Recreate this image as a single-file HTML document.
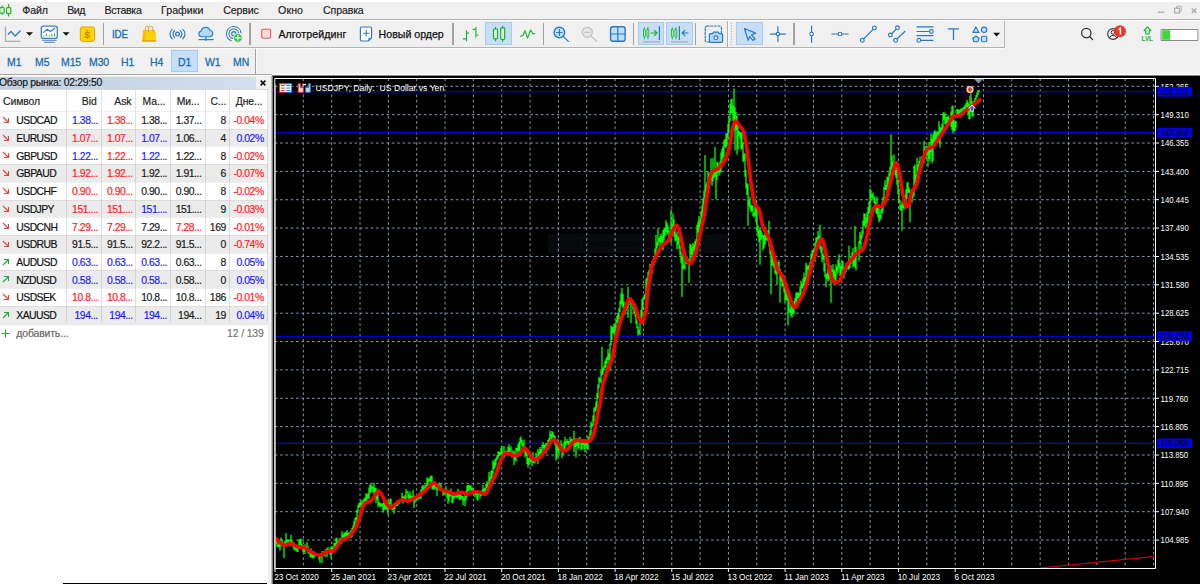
<!DOCTYPE html>
<html lang="ru"><head><meta charset="utf-8"><title>MetaTrader 5</title>
<style>
html,body{margin:0;padding:0;background:#f0f0f0;}
body{width:1200px;height:584px;overflow:hidden;font-family:"Liberation Sans",sans-serif;font-size:10.5px;color:#111;}
#app{position:relative;width:1200px;height:584px;overflow:hidden;background:#f0f0f0;}
.abs{position:absolute;}
/* top strip + menu */
.topstrip{position:absolute;left:0;top:0;width:1200px;height:2px;background:#fff;}
.menu span{position:absolute;top:3.7px;font-size:10.6px;line-height:12px;color:#1a1a1a;letter-spacing:-0.15px;white-space:nowrap;-webkit-text-stroke:0.15px #1a1a1a;}
.hline{position:absolute;left:0;width:1200px;height:1px;}
.tb-label{position:absolute;top:28px;font-size:10.6px;line-height:12px;color:#101010;white-space:nowrap;letter-spacing:0.1px;-webkit-text-stroke:0.25px #111;}
.tf span{position:absolute;top:55.9px;font-size:11.4px;line-height:13px;color:#1e6cb0;white-space:nowrap;letter-spacing:-0.1px;transform:scaleX(0.92);transform-origin:0 0;-webkit-text-stroke:0.3px #1e6cb0;}
.hl{position:absolute;background:#c7dff6;border:1px solid #a6cbef;box-sizing:border-box;}
.vdiv{position:absolute;width:1px;background:#a8a8a8;}
svg.ic{position:absolute;overflow:visible;}
/* market watch */
.mw{position:absolute;left:0;top:75px;width:272px;height:509px;background:#fff;overflow:hidden;}
.mwright{position:absolute;left:268px;top:0;width:4px;height:509px;background:#f0f0f0;}
.mwhead{position:absolute;left:0;top:1.5px;width:256px;height:12px;background:linear-gradient(to right,#c0cede,#c9d6e5 50%,#d3dfed);}
.mwtop{position:absolute;left:0;top:0;width:272px;height:15px;background:#f0f0f0;}
.mwshadow{position:absolute;left:0;top:14px;width:268px;height:1px;background:#d9d9d9;}
.mwhead span{position:absolute;left:-1px;top:0.9px;font-size:10.4px;line-height:12px;letter-spacing:-0.27px;color:#111;white-space:nowrap;-webkit-text-stroke:0.15px #111;}
.mwx{position:absolute;left:259.9px;top:4.6px;}
.mwcol{position:absolute;left:0;top:15px;width:268px;height:20.9px;background:#fff;}
.mwcol .t{top:6.2px;color:#222;letter-spacing:-0.08px;}
.row{position:absolute;left:0;width:268px;}
.t{position:absolute;top:4.3px;-webkit-text-stroke:0.18px currentColor;font-size:10.4px;line-height:12px;letter-spacing:-0.55px;white-space:nowrap;}
.t.r{text-align:right;}
.ar{position:absolute;left:2px;top:5px;}
.vsep{position:absolute;top:15px;width:1px;height:232px;background:rgba(150,150,150,0.28);}
/* chart */
.pl{font-family:"Liberation Sans",sans-serif;font-size:8.8px;fill:#fff;}
.ttl{font-family:"Liberation Sans",sans-serif;font-size:8.4px;fill:#fff;}

</style></head>
<body>
<div id="app">
<div class="topstrip"></div>
<!-- app logo -->
<svg class="ic" style="left:0;top:0" width="12" height="20" viewBox="0 0 12 20">
  <path d="M2.2 5.5V15M8.6 3.9V16.4" stroke="#20b030" stroke-width="1.1" fill="none"/>
  <rect x="-0.2" y="7.6" width="4.4" height="5.6" rx="1" fill="#e8ffe8" stroke="#20b030" stroke-width="1.2"/>
  <rect x="6.5" y="7.6" width="4.3" height="6" rx="1" fill="#e8ffe8" stroke="#20b030" stroke-width="1.2"/>
</svg>
<div class="menu">
  <span style="left:22.3px">Файл</span>
  <span style="left:67.2px;letter-spacing:-0.45px">Вид</span>
  <span style="left:104.4px;letter-spacing:-0.33px">Вставка</span>
  <span style="left:161px;letter-spacing:0.05px">Графики</span>
  <span style="left:223.2px">Сервис</span>
  <span style="left:278.1px;letter-spacing:0.1px">Окно</span>
  <span style="left:323.1px">Справка</span>
</div>
<!-- window controls -->
<svg class="ic" style="left:1155px;top:4px" width="45" height="12" viewBox="0 0 45 12">
  <path d="M2.8 8.2H9.4" stroke="#ababab" stroke-width="1.3"/>
  <path d="M21.5 4V2.3H26.3V7.2H24.6" stroke="#b4b4b4" stroke-width="1" fill="none"/>
  <rect x="19.6" y="4.2" width="4.8" height="4.8" stroke="#ababab" stroke-width="1.2" fill="none"/>
  <path d="M36.8 4.4L41.4 9M41.4 4.4L36.8 9" stroke="#ababab" stroke-width="1.4"/>
</svg>
<!-- separators between rows -->
<div class="hline" style="top:19px;background:#b4b4b4"></div>
<div class="hline" style="top:20px;background:#fbfbfb"></div>
<div class="hline" style="top:46.8px;background:#b2b2b2;width:1004px"></div>
<div class="hline" style="top:47.8px;background:#fbfbfb;width:1004px"></div>
<div class="vdiv" style="left:1003.5px;top:21px;height:26.5px;background:#b8b8b8"></div>
<div class="vdiv" style="left:727px;top:21px;height:26px;background:#b0b0b0"></div>
<div class="vdiv" style="left:728px;top:21px;height:26px;background:#fafafa"></div>
<div class="vdiv" style="left:255px;top:48.5px;height:26px;background:#a0a0a0"></div>
<div class="vdiv" style="left:256px;top:48.5px;height:26px;background:#fafafa"></div>
<!-- toolbar separators -->
<div class="vdiv" style="left:102.5px;top:23.2px;height:21.5px;width:1.4px;background:#a2a2a2"></div>
<div class="vdiv" style="left:249.4px;top:23.2px;height:21.5px;width:1.4px;background:#a2a2a2"></div>
<div class="vdiv" style="left:452.3px;top:23.2px;height:21.5px;width:1.4px;background:#a2a2a2"></div>
<div class="vdiv" style="left:542.9px;top:23.2px;height:21.5px;width:1.4px;background:#a2a2a2"></div>
<div class="vdiv" style="left:632.9px;top:23.2px;height:21.5px;width:1.4px;background:#a2a2a2"></div>
<div class="vdiv" style="left:694.8px;top:23.2px;height:21.5px;width:1.4px;background:#a2a2a2"></div>
<div class="vdiv" style="left:793.4px;top:23.2px;height:21.5px;width:1.4px;background:#a2a2a2"></div>
<!-- highlights -->
<div class="hl" style="left:485.3px;top:22.3px;width:26.6px;height:22.5px"></div>
<div class="hl" style="left:637.8px;top:22.3px;width:26.4px;height:22.5px"></div>
<div class="hl" style="left:666px;top:22.3px;width:26.5px;height:22.5px"></div>
<div class="hl" style="left:736px;top:22.3px;width:26.8px;height:22.5px"></div>
<div class="hl" style="left:171px;top:49.8px;width:26.5px;height:22.7px"></div>
<!-- all toolbar icons in one svg (page coords) -->
<svg class="ic" style="left:0;top:0" width="1200" height="50" viewBox="0 0 1200 50">
  <g fill="none" stroke-linecap="round" stroke-linejoin="round">
  <!-- chart icon -->
  <path d="M5.5 27V41.3H20" stroke="#ababab" stroke-width="1.3"/>
  <path d="M8.2 34.2L11 31.5L15.1 36L20.2 31" stroke="#2a7ac0" stroke-width="1.2"/>
  <path d="M26 32.2H33L29.5 35.8Z" fill="#111" stroke="none"/>
  <!-- indicators icon -->
  <rect x="41.3" y="26.1" width="16" height="12.3" rx="2.2" fill="#fff" stroke="#3a82c4" stroke-width="1.3"/>
  <path d="M43.6 32.4L47.2 29.3L50.4 31.5L55 28.3" stroke="#2a7ac0" stroke-width="1.1"/>
  <path d="M43.6 35.6V36.6M46.3 34V36.6M49.5 35.2V36.6M51.9 34.2V36.6M54.6 33.3V36.6" stroke="#22b43a" stroke-width="1.1" stroke-linecap="butt"/>
  <path d="M42.6 40.3H56.2M44.5 42.2H54.3" stroke="#3a82c4" stroke-width="1.1"/>
  <path d="M62.6 32.2H69.6L66.1 35.8Z" fill="#111" stroke="none"/>
  <!-- dollar icon -->
  <rect x="80.3" y="26.9" width="14.2" height="14.5" rx="2.3" fill="#ffd400" stroke="#e6a700" stroke-width="1"/>
  <!-- bag -->
  <path d="M143.6 30.2H154.9L156 41.5H142.6Z" fill="#ffd200" stroke="#fbfbfb" stroke-width="1.6"/>
  <path d="M143.6 30.2H154.9L156 41.5H142.6Z" fill="#ffd200" stroke="#e2aa00" stroke-width="0.5"/>
  <path d="M143.6 30.2H145.6L145 41.5H142.6Z" fill="#f0bc00" stroke="none"/>
  <path d="M142.75 40.1H155.85L156 41.5H142.6Z" fill="#e4a800" stroke="none"/>
  <path d="M145.4 30.3V28.5a1.55 2.4 0 0 1 3.1 0V32.6M148.5 28.5a2.2 2.4 0 0 1 4.4 0V32.6" stroke="#d9a030" stroke-width="0.95" stroke-linecap="butt"/>
  <!-- signals -->
  <circle cx="177.5" cy="34.1" r="1.9" fill="#cfe6fb" stroke="#2a7ac0" stroke-width="1.2"/>
  <path d="M174.7 30.7a4.4 4.4 0 0 0 0 6.8M180.3 30.7a4.4 4.4 0 0 1 0 6.8M172.2 29.4a6.1 6.1 0 0 0 0 9.4M182.8 29.4a6.1 6.1 0 0 1 0 9.4" stroke="#2a7ac0" stroke-width="1.15"/>
  <!-- cloud -->
  <path d="M201.6 36.8a2.9 2.9 0 0 1 -0.5 -5.7a4.6 4.6 0 0 1 8.8 -0.9a3.4 3.4 0 0 1 0.5 6.6Z" fill="#b4dafa" stroke="#2e7cc0" stroke-width="1.1"/>
  <path d="M206 37V39.5M199 39.6H213.2" stroke="#2e7cc0" stroke-width="1.2"/>
  <circle cx="206" cy="39.8" r="1" fill="#2e7cc0" stroke="none"/>
  <!-- radar -->
  <circle cx="233.8" cy="33.8" r="2.2" fill="#cfe6fb" stroke="#2e7cc0" stroke-width="1.1"/>
  <path d="M238.6 33.8a4.8 4.8 0 1 0 -6 4.6M241 32.8a7.3 7.3 0 1 0 -9.8 7.9" stroke="#2e7cc0" stroke-width="1.1"/>
  <circle cx="237.9" cy="37.9" r="4.3" fill="#30c040" stroke="#f0f0f0" stroke-width="0.8"/>
  <path d="M235.5 37.9H240.3M237.9 35.5V40.3" stroke="#fff" stroke-width="1.1"/>
  <!-- algo trading -->
  <rect x="261.7" y="29.3" width="9" height="9" rx="1.6" fill="#fbdcd8" stroke="#e25850" stroke-width="1.1"/>
  <!-- new order -->
  <g transform="translate(0.7,0)"><path d="M361.3 27H369.3a1.6 1.6 0 0 1 1.6 1.6V37.6L367.6 41H361.3a1.6 1.6 0 0 1 -1.6 -1.6V28.6a1.6 1.6 0 0 1 1.6 -1.6Z" fill="#fff" stroke="#2e7cc0" stroke-width="1.2"/>
  <path d="M370.9 37.8H367.8V41Z" fill="#2e7cc0" stroke="none"/>
  <path d="M362.8 33.2H368.4M365.6 30.4V36" stroke="#2e7cc0" stroke-width="1.1"/></g>
  <!-- bars -->
  <path d="M466.5 30.6V41.3M463 38.8H466.5M466.5 33.1H469M475.9 26.9V37.5M472.5 29.4H475.9M475.9 35H478.5" stroke="#22b43a" stroke-width="1.15" stroke-linecap="butt"/>
  <!-- candles -->
  <path d="M495.5 27.3V40.7M502.7 26V41.6" stroke="#18b030" stroke-width="1.1"/>
  <rect x="493.5" y="29" width="4" height="9.8" rx="0.8" fill="#dcfadc" stroke="#18b030" stroke-width="1.2"/>
  <rect x="500.7" y="27.8" width="4" height="11.6" rx="0.8" fill="#dcfadc" stroke="#18b030" stroke-width="1.2"/>
  <!-- line chart -->
  <path d="M520.6 36.3L523.1 35.3L525 30.6L527.5 38.1L530.6 30L533.1 33.8L534.8 33.5" stroke="#22b43a" stroke-width="1.2"/>
  <!-- zoom in -->
  <circle cx="559.4" cy="32.5" r="5.3" fill="#c4e2fb" stroke="#2a78c0" stroke-width="1.4"/>
  <path d="M556.6 32.5H562.2M559.4 29.7V35.3" stroke="#2a78c0" stroke-width="1.2"/>
  <path d="M563.4 36.6L568.4 41.4" stroke="#2a78c0" stroke-width="1.3"/>
  <!-- zoom out -->
  <circle cx="587.3" cy="32.3" r="5" fill="#e6e6e6" stroke="#c2c2c2" stroke-width="1.3"/>
  <path d="M584.7 32.3H589.9" stroke="#c2c2c2" stroke-width="1.2"/>
  <path d="M591.2 36.2L596.4 41" stroke="#c2c2c2" stroke-width="1.2"/>
  <!-- grid -->
  <rect x="610.6" y="26.8" width="14.5" height="14.5" rx="2.2" fill="#bfe0fb" stroke="#2a78c0" stroke-width="1.4"/>
  <path d="M617.8 27V41.2M610.8 34H625" stroke="#2a78c0" stroke-width="1.2"/>
  <!-- autoscroll -->
  <path d="M644.4 27.6V39M647.9 27.6V39" stroke="#18b030" stroke-width="0.9"/>
  <rect x="643.5" y="29.6" width="1.8" height="7.2" rx="0.5" fill="#dcfadc" stroke="#18b030" stroke-width="0.9"/>
  <rect x="647" y="29.2" width="1.8" height="8" rx="0.5" fill="#dcfadc" stroke="#18b030" stroke-width="0.9"/>
  <path d="M651 33H656.8M654.4 30.4L657 33L654.4 35.6" stroke="#18b030" stroke-width="1.2"/>
  <path d="M659.4 26.5V39.5" stroke="#2a78c0" stroke-width="1.2"/>
  <path d="M643 41.9H660" stroke="#a8a8a8" stroke-width="1.2" stroke-linecap="butt"/>
  <!-- chart shift -->
  <path d="M672.3 27.6V39M675.9 27.6V39" stroke="#18b030" stroke-width="0.9"/>
  <rect x="671.4" y="29.6" width="1.8" height="7.2" rx="0.5" fill="#dcfadc" stroke="#18b030" stroke-width="0.9"/>
  <rect x="675" y="29.2" width="1.8" height="8" rx="0.5" fill="#dcfadc" stroke="#18b030" stroke-width="0.9"/>
  <path d="M679.4 26.5V39.5" stroke="#2a78c0" stroke-width="1.2"/>
  <path d="M682.2 33H688M684.8 30.4L682.2 33L684.8 35.6" stroke="#2a78c0" stroke-width="1.2"/>
  <path d="M671 41.9H688" stroke="#a8a8a8" stroke-width="1.2" stroke-linecap="butt"/>
  <!-- screenshot -->
  <rect x="705.2" y="26" width="16.2" height="16" rx="2" stroke="#2a78c0" stroke-width="1.2" stroke-dasharray="2 1.6"/>
  <path d="M710.6 33.6H712.6L713.6 32.2H718.2L719.2 33.6H721.4a1.2 1.2 0 0 1 1.2 1.2V41.2a1.2 1.2 0 0 1 -1.2 1.2H710.6a1.2 1.2 0 0 1 -1.2 -1.2V34.8a1.2 1.2 0 0 1 1.2 -1.2Z" fill="#b4d8fa" stroke="#2a78c0" stroke-width="1.2"/>
  <circle cx="715.9" cy="37.8" r="1.9" fill="#eef6ff" stroke="#2a78c0" stroke-width="1.1"/>
  <!-- grip -->
  <path d="M731.5 23V45" stroke="#b0b0b0" stroke-width="1.2" stroke-dasharray="1 1.6" stroke-linecap="butt"/>
  <!-- cursor -->
  <path d="M744.4 28.5L755.6 33.1L751.4 35L755.2 38.8L753 40.4L749.6 36.6L748.2 40.4Z" fill="#b8defc" stroke="#2a78c0" stroke-width="1.2"/>
  <!-- crosshair -->
  <path d="M777.9 26.6V41.6M770.4 34.1H785.4" stroke="#2a78c0" stroke-width="1.2"/>
  <circle cx="777.9" cy="34.1" r="1.7" fill="#fff" stroke="#2a78c0" stroke-width="1.1"/>
  <!-- vline -->
  <path d="M811.6 26V42.3" stroke="#2a78c0" stroke-width="1.2"/>
  <circle cx="811.6" cy="34" r="1.8" fill="#fff" stroke="#2a78c0" stroke-width="1.1"/>
  <!-- hline -->
  <path d="M831.9 34H848.1" stroke="#2a78c0" stroke-width="1.2"/>
  <circle cx="840" cy="34" r="1.8" fill="#fff" stroke="#2a78c0" stroke-width="1.1"/>
  <!-- trend -->
  <path d="M862.3 40.3L874.4 27.9" stroke="#2a78c0" stroke-width="1.2"/>
  <circle cx="862.3" cy="40.3" r="1.9" fill="#e4f1fd" stroke="#2a78c0" stroke-width="1.1"/>
  <circle cx="874.4" cy="27.9" r="1.9" fill="#e4f1fd" stroke="#2a78c0" stroke-width="1.1"/>
  <!-- channel -->
  <path d="M890.4 35L897.5 27.8M895.6 40.3L904.8 31.5" stroke="#2a78c0" stroke-width="1.2"/>
  <circle cx="890.4" cy="35" r="1.9" fill="#e4f1fd" stroke="#2a78c0" stroke-width="1.1"/>
  <circle cx="897.5" cy="27.8" r="1.9" fill="#e4f1fd" stroke="#2a78c0" stroke-width="1.1"/>
  <circle cx="895.6" cy="40.3" r="1.9" fill="#e4f1fd" stroke="#2a78c0" stroke-width="1.1"/>
  <!-- fibo -->
  <path d="M917 26.9H933M917 31.5H929.4M917 35.6H933M921 40.3H933" stroke="#2a78c0" stroke-width="1.2"/>
  <circle cx="931.4" cy="31.5" r="1.9" fill="#e4f1fd" stroke="#2a78c0" stroke-width="1.1"/>
  <circle cx="918.8" cy="40.3" r="1.9" fill="#e4f1fd" stroke="#2a78c0" stroke-width="1.1"/>
  <!-- T -->
  <path d="M947.8 28.8H959M953.5 28.8V40" stroke="#2a78c0" stroke-width="1.3" stroke-linecap="butt"/>
  <!-- shapes -->
  <path d="M975.9 27L979 32.4H972.8Z" fill="#bfe0fb" stroke="#2a78c0" stroke-width="1.1"/>
  <circle cx="984.1" cy="29.8" r="2.7" fill="#bfe0fb" stroke="#2a78c0" stroke-width="1.1"/>
  <path d="M975.9 36L979 38.3L977.8 41.8H974L972.8 38.3Z" fill="#bfe0fb" stroke="#2a78c0" stroke-width="1.1"/>
  <rect x="981.4" y="36.3" width="5.4" height="5.4" rx="1.2" fill="#bfe0fb" stroke="#2a78c0" stroke-width="1.1"/>
  <path d="M993.1 32.8H1000.1L996.6 36.4Z" fill="#111" stroke="none"/>
  <!-- search -->
  <circle cx="1086.3" cy="33.1" r="4.7" stroke="#2a2a2a" stroke-width="1.2"/>
  <path d="M1089.8 36.7L1092.6 39.6" stroke="#2a2a2a" stroke-width="1.3"/>
  <!-- account -->
  <circle cx="1113.1" cy="34" r="5.4" stroke="#333" stroke-width="1.1"/>
  <circle cx="1113.1" cy="32.4" r="1.9" stroke="#333" stroke-width="1"/>
  <path d="M1109.4 37.8a4 4 0 0 1 7.4 0" stroke="#333" stroke-width="1"/>
  <circle cx="1120" cy="31.3" r="6" fill="#e8382c" stroke="none"/>
  <path d="M1118.6 29.6L1120.4 28.2V34.6" stroke="#fff" stroke-width="1.4" stroke-linecap="butt" stroke-linejoin="miter"/>
  <!-- LVL -->
  <path d="M1147.5 27L1151 30.6H1149.2V34H1145.8V30.6H1144Z" fill="#d8f8d8" stroke="#22b040" stroke-width="1.1"/>
  <!-- signal bar -->
  <rect x="1161.5" y="29.5" width="36.4" height="11" fill="#fff" stroke="#8c8c8c" stroke-width="1"/>
  <rect x="1162.2" y="30.2" width="8" height="9.6" fill="#3ed83e" stroke="none"/>
  </g>
  <text x="83.9" y="37.7" font-family="Liberation Sans" font-size="9.6" fill="#c08800" stroke="#c08800" stroke-width="0.25">S</text>
  <path d="M87.1 29.3V39.2" stroke="#c08800" stroke-width="0.9"/>
  <text x="1141.6" y="40.7" font-family="Liberation Sans" font-weight="bold" font-size="6.4" fill="#22b040" letter-spacing="-0.1">LVL</text>
</svg>
<span class="tb-label" style="left:112.4px;font-size:11.4px;letter-spacing:-0.2px;text-shadow:none;top:28.2px;transform:scaleX(0.86);transform-origin:0 0;-webkit-text-stroke:0.35px #1e6cb0;color:#1e6cb0">IDE</span>
<span class="tb-label" style="left:278.4px">Алготрейдинг</span>
<span class="tb-label" style="left:378.6px;letter-spacing:0">Новый ордер</span>
<div class="tf">
  <span style="left:7px">M1</span>
  <span style="left:35px">M5</span>
  <span style="left:61px">M15</span>
  <span style="left:89.1px">M30</span>
  <span style="left:121.2px">H1</span>
  <span style="left:150px">H4</span>
  <span style="left:178.3px">D1</span>
  <span style="left:205.4px">W1</span>
  <span style="left:233.2px">MN</span>
</div>
<!-- band under the toolbars / above panes -->
<div class="hline" style="top:73.9px;background:#a8a8a8;width:271.5px;z-index:5"></div>
<div class="hline" style="top:74.9px;background:#fbfbfb;width:271.5px;z-index:5"></div>

<div class="mw">
<div class="mwtop"></div><div class="mwright"></div>
<div class="mwhead"><span>Обзор рынка: 02:29:50</span></div><div class="mwshadow"></div>
<svg class="mwx" width="6" height="6" viewBox="0 0 6 6"><path d="M0.6 0.6L5.4 5.4M5.4 0.6L0.6 5.4" stroke="#111" stroke-width="1.6"/></svg>
<div class="mwcol">
<span class="t" style="left:3px">Символ</span>
<span class="t r" style="right:171.4px">Bid</span>
<span class="t r" style="right:136.6px">Ask</span>
<span class="t" style="left:142.6px">Ма...</span>
<span class="t" style="left:176.7px">Ми...</span>
<span class="t" style="left:210.5px">С...</span>
<span class="t" style="left:235.7px">Дне...</span>
</div>
<div class="row" style="top:35.90px;height:17.73px;background:#fff;box-shadow:inset 0 1px 0 rgba(0,0,0,0.06)">
<svg class="ar" width="8" height="8" viewBox="0 0 8 8"><path d="M1 1L6.5 6.5M6.5 2V6.5H2" stroke="#e8403a" stroke-width="1.1" fill="none"/></svg>
<span class="t" style="left:16.3px">USDCAD</span>
<span class="t r" style="right:170.2px;letter-spacing:-0.45px;color:#1c1cff">1.38...</span>
<span class="t r" style="right:135.4px;letter-spacing:-0.45px;color:#ff1c1c">1.38...</span>
<span class="t r" style="right:101.0px;letter-spacing:-0.45px;color:#1a1a1a">1.38...</span>
<span class="t r" style="right:66.6px;letter-spacing:-0.45px;color:#1a1a1a">1.37...</span>
<span class="t r" style="right:42.2px;letter-spacing:-0.45px;color:#1a1a1a">8</span>
<span class="t r" style="right:4.3px;letter-spacing:-0.45px;color:#ff1c1c">-0.04%</span>
</div>
<div class="row" style="top:53.63px;height:17.73px;background:#ebebeb;box-shadow:inset 0 1px 0 rgba(0,0,0,0.06)">
<svg class="ar" width="8" height="8" viewBox="0 0 8 8"><path d="M1 1L6.5 6.5M6.5 2V6.5H2" stroke="#e8403a" stroke-width="1.1" fill="none"/></svg>
<span class="t" style="left:16.3px">EURUSD</span>
<span class="t r" style="right:170.2px;letter-spacing:-0.45px;color:#ff1c1c">1.07...</span>
<span class="t r" style="right:135.4px;letter-spacing:-0.45px;color:#ff1c1c">1.07...</span>
<span class="t r" style="right:101.0px;letter-spacing:-0.45px;color:#1c1cff">1.07...</span>
<span class="t r" style="right:66.6px;letter-spacing:-0.45px;color:#1a1a1a">1.06...</span>
<span class="t r" style="right:42.2px;letter-spacing:-0.45px;color:#1a1a1a">4</span>
<span class="t r" style="right:4.3px;letter-spacing:-0.45px;color:#1c1cff">0.02%</span>
</div>
<div class="row" style="top:71.36px;height:17.73px;background:#fff;box-shadow:inset 0 1px 0 rgba(0,0,0,0.06)">
<svg class="ar" width="8" height="8" viewBox="0 0 8 8"><path d="M1 1L6.5 6.5M6.5 2V6.5H2" stroke="#e8403a" stroke-width="1.1" fill="none"/></svg>
<span class="t" style="left:16.3px">GBPUSD</span>
<span class="t r" style="right:170.2px;letter-spacing:-0.45px;color:#1c1cff">1.22...</span>
<span class="t r" style="right:135.4px;letter-spacing:-0.45px;color:#ff1c1c">1.22...</span>
<span class="t r" style="right:101.0px;letter-spacing:-0.45px;color:#1c1cff">1.22...</span>
<span class="t r" style="right:66.6px;letter-spacing:-0.45px;color:#1a1a1a">1.22...</span>
<span class="t r" style="right:42.2px;letter-spacing:-0.45px;color:#1a1a1a">8</span>
<span class="t r" style="right:4.3px;letter-spacing:-0.45px;color:#ff1c1c">-0.02%</span>
</div>
<div class="row" style="top:89.09px;height:17.73px;background:#ebebeb;box-shadow:inset 0 1px 0 rgba(0,0,0,0.06)">
<svg class="ar" width="8" height="8" viewBox="0 0 8 8"><path d="M1 1L6.5 6.5M6.5 2V6.5H2" stroke="#e8403a" stroke-width="1.1" fill="none"/></svg>
<span class="t" style="left:16.3px">GBPAUD</span>
<span class="t r" style="right:170.2px;letter-spacing:-0.45px;color:#ff1c1c">1.92...</span>
<span class="t r" style="right:135.4px;letter-spacing:-0.45px;color:#ff1c1c">1.92...</span>
<span class="t r" style="right:101.0px;letter-spacing:-0.45px;color:#1a1a1a">1.92...</span>
<span class="t r" style="right:66.6px;letter-spacing:-0.45px;color:#1a1a1a">1.91...</span>
<span class="t r" style="right:42.2px;letter-spacing:-0.45px;color:#1a1a1a">6</span>
<span class="t r" style="right:4.3px;letter-spacing:-0.45px;color:#ff1c1c">-0.07%</span>
</div>
<div class="row" style="top:106.82px;height:17.73px;background:#fff;box-shadow:inset 0 1px 0 rgba(0,0,0,0.06)">
<svg class="ar" width="8" height="8" viewBox="0 0 8 8"><path d="M1 1L6.5 6.5M6.5 2V6.5H2" stroke="#e8403a" stroke-width="1.1" fill="none"/></svg>
<span class="t" style="left:16.3px">USDCHF</span>
<span class="t r" style="right:170.2px;letter-spacing:-0.45px;color:#ff1c1c">0.90...</span>
<span class="t r" style="right:135.4px;letter-spacing:-0.45px;color:#ff1c1c">0.90...</span>
<span class="t r" style="right:101.0px;letter-spacing:-0.45px;color:#1a1a1a">0.90...</span>
<span class="t r" style="right:66.6px;letter-spacing:-0.45px;color:#1a1a1a">0.90...</span>
<span class="t r" style="right:42.2px;letter-spacing:-0.45px;color:#1a1a1a">8</span>
<span class="t r" style="right:4.3px;letter-spacing:-0.45px;color:#ff1c1c">-0.02%</span>
</div>
<div class="row" style="top:124.55px;height:17.73px;background:#ebebeb;box-shadow:inset 0 1px 0 rgba(0,0,0,0.06)">
<svg class="ar" width="8" height="8" viewBox="0 0 8 8"><path d="M1 1L6.5 6.5M6.5 2V6.5H2" stroke="#e8403a" stroke-width="1.1" fill="none"/></svg>
<span class="t" style="left:16.3px">USDJPY</span>
<span class="t r" style="right:170.2px;letter-spacing:-0.45px;color:#ff1c1c">151....</span>
<span class="t r" style="right:135.4px;letter-spacing:-0.45px;color:#ff1c1c">151....</span>
<span class="t r" style="right:101.0px;letter-spacing:-0.45px;color:#1c1cff">151....</span>
<span class="t r" style="right:66.6px;letter-spacing:-0.45px;color:#1a1a1a">151....</span>
<span class="t r" style="right:42.2px;letter-spacing:-0.45px;color:#1a1a1a">9</span>
<span class="t r" style="right:4.3px;letter-spacing:-0.45px;color:#ff1c1c">-0.03%</span>
</div>
<div class="row" style="top:142.28px;height:17.73px;background:#fff;box-shadow:inset 0 1px 0 rgba(0,0,0,0.06)">
<svg class="ar" width="8" height="8" viewBox="0 0 8 8"><path d="M1 1L6.5 6.5M6.5 2V6.5H2" stroke="#e8403a" stroke-width="1.1" fill="none"/></svg>
<span class="t" style="left:16.3px">USDCNH</span>
<span class="t r" style="right:170.2px;letter-spacing:-0.45px;color:#ff1c1c">7.29...</span>
<span class="t r" style="right:135.4px;letter-spacing:-0.45px;color:#ff1c1c">7.29...</span>
<span class="t r" style="right:101.0px;letter-spacing:-0.45px;color:#1a1a1a">7.29...</span>
<span class="t r" style="right:66.6px;letter-spacing:-0.45px;color:#ff1c1c">7.28...</span>
<span class="t r" style="right:42.2px;letter-spacing:-0.45px;color:#1a1a1a">169</span>
<span class="t r" style="right:4.3px;letter-spacing:-0.45px;color:#ff1c1c">-0.01%</span>
</div>
<div class="row" style="top:160.01px;height:17.73px;background:#ebebeb;box-shadow:inset 0 1px 0 rgba(0,0,0,0.06)">
<svg class="ar" width="8" height="8" viewBox="0 0 8 8"><path d="M1 1L6.5 6.5M6.5 2V6.5H2" stroke="#e8403a" stroke-width="1.1" fill="none"/></svg>
<span class="t" style="left:16.3px">USDRUB</span>
<span class="t r" style="right:170.2px;letter-spacing:-0.45px;color:#1a1a1a">91.5...</span>
<span class="t r" style="right:135.4px;letter-spacing:-0.45px;color:#1a1a1a">91.5...</span>
<span class="t r" style="right:101.0px;letter-spacing:-0.45px;color:#1a1a1a">92.2...</span>
<span class="t r" style="right:66.6px;letter-spacing:-0.45px;color:#1a1a1a">91.5...</span>
<span class="t r" style="right:42.2px;letter-spacing:-0.45px;color:#1a1a1a">0</span>
<span class="t r" style="right:4.3px;letter-spacing:-0.45px;color:#ff1c1c">-0.74%</span>
</div>
<div class="row" style="top:177.74px;height:17.73px;background:#fff;box-shadow:inset 0 1px 0 rgba(0,0,0,0.06)">
<svg class="ar" width="8" height="8" viewBox="0 0 8 8"><path d="M1 7L6.5 1.5M2 1.5H6.5V6" stroke="#22a83a" stroke-width="1.1" fill="none"/></svg>
<span class="t" style="left:16.3px">AUDUSD</span>
<span class="t r" style="right:170.2px;letter-spacing:-0.45px;color:#1c1cff">0.63...</span>
<span class="t r" style="right:135.4px;letter-spacing:-0.45px;color:#1c1cff">0.63...</span>
<span class="t r" style="right:101.0px;letter-spacing:-0.45px;color:#1c1cff">0.63...</span>
<span class="t r" style="right:66.6px;letter-spacing:-0.45px;color:#1a1a1a">0.63...</span>
<span class="t r" style="right:42.2px;letter-spacing:-0.45px;color:#1a1a1a">8</span>
<span class="t r" style="right:4.3px;letter-spacing:-0.45px;color:#1c1cff">0.05%</span>
</div>
<div class="row" style="top:195.47px;height:17.73px;background:#ebebeb;box-shadow:inset 0 1px 0 rgba(0,0,0,0.06)">
<svg class="ar" width="8" height="8" viewBox="0 0 8 8"><path d="M1 7L6.5 1.5M2 1.5H6.5V6" stroke="#22a83a" stroke-width="1.1" fill="none"/></svg>
<span class="t" style="left:16.3px">NZDUSD</span>
<span class="t r" style="right:170.2px;letter-spacing:-0.45px;color:#1c1cff">0.58...</span>
<span class="t r" style="right:135.4px;letter-spacing:-0.45px;color:#1c1cff">0.58...</span>
<span class="t r" style="right:101.0px;letter-spacing:-0.45px;color:#1c1cff">0.58...</span>
<span class="t r" style="right:66.6px;letter-spacing:-0.45px;color:#1a1a1a">0.58...</span>
<span class="t r" style="right:42.2px;letter-spacing:-0.45px;color:#1a1a1a">0</span>
<span class="t r" style="right:4.3px;letter-spacing:-0.45px;color:#1c1cff">0.05%</span>
</div>
<div class="row" style="top:213.20px;height:17.73px;background:#fff;box-shadow:inset 0 1px 0 rgba(0,0,0,0.06)">
<svg class="ar" width="8" height="8" viewBox="0 0 8 8"><path d="M1 1L6.5 6.5M6.5 2V6.5H2" stroke="#e8403a" stroke-width="1.1" fill="none"/></svg>
<span class="t" style="left:16.3px">USDSEK</span>
<span class="t r" style="right:170.2px;letter-spacing:-0.45px;color:#ff1c1c">10.8...</span>
<span class="t r" style="right:135.4px;letter-spacing:-0.45px;color:#ff1c1c">10.8...</span>
<span class="t r" style="right:101.0px;letter-spacing:-0.45px;color:#1a1a1a">10.8...</span>
<span class="t r" style="right:66.6px;letter-spacing:-0.45px;color:#1a1a1a">10.8...</span>
<span class="t r" style="right:42.2px;letter-spacing:-0.45px;color:#1a1a1a">186</span>
<span class="t r" style="right:4.3px;letter-spacing:-0.45px;color:#ff1c1c">-0.01%</span>
</div>
<div class="row" style="top:230.93px;height:17.73px;background:#ebebeb;box-shadow:inset 0 1px 0 rgba(0,0,0,0.06)">
<svg class="ar" width="8" height="8" viewBox="0 0 8 8"><path d="M1 7L6.5 1.5M2 1.5H6.5V6" stroke="#22a83a" stroke-width="1.1" fill="none"/></svg>
<span class="t" style="left:16.3px">XAUUSD</span>
<span class="t r" style="right:170.2px;letter-spacing:-0.45px;color:#1c1cff">194...</span>
<span class="t r" style="right:135.4px;letter-spacing:-0.45px;color:#1c1cff">194...</span>
<span class="t r" style="right:101.0px;letter-spacing:-0.45px;color:#1c1cff">194...</span>
<span class="t r" style="right:66.6px;letter-spacing:-0.45px;color:#1a1a1a">194...</span>
<span class="t r" style="right:42.2px;letter-spacing:-0.45px;color:#1a1a1a">19</span>
<span class="t r" style="right:4.3px;letter-spacing:-0.45px;color:#1c1cff">0.04%</span>
</div>
<div class="vsep" style="left:66.1px"></div>
<div class="vsep" style="left:101.2px"></div>
<div class="vsep" style="left:135.4px"></div>
<div class="vsep" style="left:170.0px"></div>
<div class="vsep" style="left:204.5px"></div>
<div class="vsep" style="left:228.5px"></div>
<div class="vsep" style="left:266.8px"></div>
<div class="row" style="top:248.66px;height:17.73px;background:#fff;border-top:1px solid #e4e4e4">
<svg class="ar" style="left:1px;top:4.5px" width="9" height="9" viewBox="0 0 9 9"><path d="M4.5 0.5V8.5M0.5 4.5H8.5" stroke="#2cab3c" stroke-width="1.2"/></svg>
<span class="t" style="left:16.3px;top:3.3px;color:#666;letter-spacing:-0.12px">добавить...</span>
<span class="t r" style="right:4.3px;top:3.3px;color:#777;letter-spacing:-0.12px">12 / 139</span>
</div>
<div style="position:absolute;left:63px;top:508px;width:204px;height:1px;background:#000"></div>
</div>
<svg class="chart" width="928" height="509" viewBox="0 0 928 509" style="position:absolute;left:272px;top:75px;overflow:visible">
<rect x="0" y="0" width="928" height="509" fill="#f0f0f0"/>
<rect x="0" y="-1.6" width="928" height="1.7" fill="#fdfdfd"/>
<rect x="-0.5" y="0.1" width="928" height="1" fill="#8c8c8c"/>
<rect x="-0.5" y="0.1" width="1.4" height="509" fill="#8c8c8c"/>
<rect x="0.8" y="0.9" width="928" height="509" fill="#000"/>
<rect x="276" y="158.8" width="180" height="19.2" fill="#080a0d"/>
<text x="305" y="171.5" font-family="Liberation Sans" font-size="10.5" fill="#020304">Прямоугольник</text>
<path d="M31.34 3.5V493.5M59.68 3.5V493.5M88.02 3.5V493.5M116.36 3.5V493.5M144.70 3.5V493.5M173.04 3.5V493.5M201.38 3.5V493.5M229.72 3.5V493.5M258.06 3.5V493.5M286.40 3.5V493.5M314.74 3.5V493.5M343.08 3.5V493.5M371.42 3.5V493.5M399.76 3.5V493.5M428.10 3.5V493.5M456.44 3.5V493.5M484.78 3.5V493.5M513.12 3.5V493.5M541.46 3.5V493.5M569.80 3.5V493.5M598.14 3.5V493.5M626.48 3.5V493.5M654.82 3.5V493.5M683.16 3.5V493.5M711.50 3.5V493.5M739.84 3.5V493.5M768.18 3.5V493.5M796.52 3.5V493.5M824.86 3.5V493.5M853.20 3.5V493.5M881.54 3.5V493.5M2.8000000000000114 11.30H883.5M2.8000000000000114 39.66H883.5M2.8000000000000114 68.02H883.5M2.8000000000000114 96.38H883.5M2.8000000000000114 124.74H883.5M2.8000000000000114 153.10H883.5M2.8000000000000114 181.46H883.5M2.8000000000000114 209.82H883.5M2.8000000000000114 238.18H883.5M2.8000000000000114 266.54H883.5M2.8000000000000114 294.90H883.5M2.8000000000000114 323.26H883.5M2.8000000000000114 351.62H883.5M2.8000000000000114 379.98H883.5M2.8000000000000114 408.34H883.5M2.8000000000000114 436.70H883.5M2.8000000000000114 465.06H883.5" stroke="#8798ae" stroke-width="1" stroke-dasharray="2.66 2.66" fill="none"/>
<line x1="2.8000000000000114" x2="883.5" y1="16.55" y2="16.55" stroke="#0000cc" stroke-width="1.15"/>
<line x1="2.8000000000000114" x2="883.5" y1="57.65" y2="57.65" stroke="#0000cc" stroke-width="1.15"/>
<line x1="2.8000000000000114" x2="883.5" y1="261.40" y2="261.40" stroke="#0000cc" stroke-width="1.15"/>
<line x1="2.8000000000000114" x2="883.5" y1="368.35" y2="368.35" stroke="#0000cc" stroke-width="1.15"/>
<path d="M3.0 463.6V466.3M4.0 464.0V468.8M5.0 467.1V471.7M6.0 469.8V471.9M7.0 467.7V472.2M8.0 466.4V475.8M9.0 462.6V471.4M10.0 464.5V469.8M11.0 466.9V471.8M12.0 467.9V483.0M13.0 466.1V469.9M14.0 458.0V468.7M15.0 465.3V468.3M16.0 464.3V467.4M17.0 464.8V469.8M18.0 464.6V471.6M19.0 459.7V468.3M20.0 466.1V470.3M21.0 466.9V472.4M22.0 467.5V474.5M23.0 470.4V475.7M24.0 470.5V475.2M25.0 470.8V476.9M26.0 469.9V477.1M27.0 464.7V471.5M28.0 463.6V470.0M29.0 464.1V470.0M30.0 468.7V474.0M31.0 470.0V477.2M32.0 472.9V476.8M33.0 469.2V478.9M34.0 471.3V474.1M35.0 466.8V473.5M36.0 471.3V478.0M37.0 475.2V479.0M38.0 477.5V481.7M39.0 473.3V482.7M40.0 476.9V482.5M41.0 476.1V483.4M42.0 476.0V483.1M43.0 477.8V481.7M44.0 477.9V480.7M45.0 478.8V480.7M46.0 479.4V481.1M47.0 479.8V484.6M48.0 478.9V488.0M49.0 478.4V481.5M50.0 476.2V488.3M51.0 476.2V480.9M52.0 475.7V477.8M53.0 476.3V482.1M54.0 474.1V477.8M55.0 473.6V482.0M56.0 471.7V477.6M57.0 474.4V478.0M58.0 473.5V479.7M59.0 471.7V483.8M60.0 470.9V477.7M61.0 472.9V476.0M62.0 467.9V474.3M63.0 468.1V471.7M64.0 462.8V470.8M65.0 462.8V472.7M66.0 466.3V472.4M67.0 464.5V471.3M68.0 463.2V468.2M69.0 462.9V468.9M70.0 456.2V466.5M71.0 459.6V463.7M72.0 457.6V463.8M73.0 457.4V466.0M74.0 457.0V461.7M75.0 455.0V462.6M76.0 457.9V462.5M77.0 457.5V461.6M78.0 456.5V460.4M79.0 455.6V463.0M80.0 453.1V461.9M81.0 450.6V455.5M82.0 446.0V453.5M83.0 443.1V451.4M84.0 441.9V445.4M85.0 434.5V447.8M86.0 429.9V437.7M87.0 428.0V432.4M88.0 427.1V432.8M89.0 424.8V430.3M90.0 427.2V431.9M91.0 424.9V432.0M92.0 423.5V426.7M93.0 422.6V428.2M94.0 417.9V426.7M95.0 419.6V425.3M96.0 418.3V423.3M97.0 412.5V424.1M98.0 409.5V418.1M99.0 408.8V417.8M100.0 411.3V414.2M101.0 411.4V417.0M102.0 407.8V419.8M103.0 412.7V418.1M104.0 413.0V428.2M105.0 420.1V424.7M106.0 414.3V432.4M107.0 426.9V430.4M108.0 428.2V431.8M109.0 428.1V432.1M110.0 429.2V431.3M111.0 428.0V437.6M112.0 425.1V435.3M113.0 427.7V434.6M114.0 430.5V434.4M115.0 425.1V434.7M116.0 427.8V440.0M117.0 426.7V431.5M118.0 423.6V428.8M119.0 423.8V434.1M120.0 430.1V435.5M121.0 430.0V434.8M122.0 431.0V438.7M123.0 428.7V433.9M124.0 429.2V431.3M125.0 428.4V431.0M126.0 425.3V430.6M127.0 424.9V428.9M128.0 425.0V426.7M129.0 424.7V427.6M130.0 417.7V426.3M131.0 421.3V428.5M132.0 421.8V426.5M133.0 420.3V426.8M134.0 414.1V423.9M135.0 416.2V417.9M136.0 416.6V422.9M137.0 419.4V424.5M138.0 416.6V424.8M139.0 420.7V424.0M140.0 421.0V424.6M141.0 414.7V424.9M142.0 420.7V432.9M143.0 422.9V427.8M144.0 421.7V425.4M145.0 422.1V424.7M146.0 421.9V424.7M147.0 420.3V424.3M148.0 417.3V423.3M149.0 414.7V423.7M150.0 411.3V418.7M151.0 409.9V415.9M152.0 411.8V417.3M153.0 409.4V417.4M154.0 409.7V415.7M155.0 402.2V414.2M156.0 403.6V410.9M157.0 404.1V406.8M158.0 401.7V406.5M159.0 400.4V410.1M160.0 401.0V414.2M161.0 408.1V414.8M162.0 410.0V414.3M163.0 409.4V413.7M164.0 412.0V414.0M165.0 410.0V421.2M166.0 411.3V415.3M167.0 407.4V415.3M168.0 408.2V413.3M169.0 409.7V415.9M170.0 412.7V417.1M171.0 414.0V420.8M172.0 415.6V419.6M173.0 414.2V419.2M174.0 411.3V417.2M175.0 415.8V423.6M176.0 416.9V428.7M177.0 417.6V426.2M178.0 417.6V421.6M179.0 413.5V421.6M180.0 417.2V428.0M181.0 421.1V427.9M182.0 417.7V423.9M183.0 417.8V422.5M184.0 419.4V422.6M185.0 417.0V423.1M186.0 413.7V421.9M187.0 416.5V424.6M188.0 419.3V424.9M189.0 419.3V424.6M190.0 421.0V423.7M191.0 421.0V430.1M192.0 423.6V426.1M193.0 420.1V431.2M194.0 415.7V425.0M195.0 410.4V422.1M196.0 409.9V416.6M197.0 409.7V415.9M198.0 410.8V414.1M199.0 410.3V415.5M200.0 413.1V417.6M201.0 412.2V418.2M202.0 415.0V418.5M203.0 416.0V422.6M204.0 416.1V419.8M205.0 417.3V425.4M206.0 417.9V425.3M207.0 417.3V419.8M208.0 416.2V423.7M209.0 417.8V421.1M210.0 415.1V420.5M211.0 409.7V417.4M212.0 413.5V418.9M213.0 412.9V416.3M214.0 409.0V415.6M215.0 406.1V413.1M216.0 407.6V415.4M217.0 397.0V408.6M218.0 401.7V413.1M219.0 395.7V404.2M220.0 395.5V403.8M221.0 385.3V399.2M222.0 386.8V394.6M223.0 384.1V392.8M224.0 383.2V390.2M225.0 380.2V385.3M226.0 376.2V383.9M227.0 376.7V381.3M228.0 377.3V380.1M229.0 373.0V380.5M230.0 371.0V380.7M231.0 377.0V381.4M232.0 371.1V383.3M233.0 376.2V380.9M234.0 376.6V380.1M235.0 375.6V379.5M236.0 371.7V378.2M237.0 369.3V378.0M238.0 372.8V376.2M239.0 371.3V380.1M240.0 377.8V382.4M241.0 375.3V379.7M242.0 376.2V390.0M243.0 378.1V384.9M244.0 372.5V386.8M245.0 372.9V375.8M246.0 369.2V379.5M247.0 367.0V376.0M248.0 363.0V379.1M249.0 361.2V367.9M250.0 364.9V370.5M251.0 368.0V373.6M252.0 364.4V375.5M253.0 373.4V382.4M254.0 374.4V381.1M255.0 378.0V389.1M256.0 382.6V392.6M257.0 383.5V390.0M258.0 382.5V386.8M259.0 380.4V387.2M260.0 382.2V391.1M261.0 376.9V387.9M262.0 382.6V388.0M263.0 382.8V388.3M264.0 377.8V386.3M265.0 381.5V385.6M266.0 373.9V389.3M267.0 376.2V382.6M268.0 372.0V379.0M269.0 374.0V381.6M270.0 370.0V379.3M271.0 366.9V373.0M272.0 369.5V375.2M273.0 369.5V373.9M274.0 368.0V378.8M275.0 368.2V373.7M276.0 364.8V375.0M277.0 363.2V367.1M278.0 355.8V367.1M279.0 358.7V364.2M280.0 356.0V364.6M281.0 357.0V362.0M282.0 359.9V364.1M283.0 360.7V370.3M284.0 367.4V385.6M285.0 370.0V383.0M286.0 363.8V375.9M287.0 367.4V380.7M288.0 371.1V374.3M289.0 365.3V376.7M290.0 368.5V383.0M291.0 374.0V379.8M292.0 366.5V376.9M293.0 361.8V374.4M294.0 366.2V370.5M295.0 363.9V368.0M296.0 366.1V370.7M297.0 366.3V370.3M298.0 361.8V369.8M299.0 364.0V368.7M300.0 363.8V367.2M301.0 364.8V368.9M302.0 355.8V377.2M303.0 366.3V371.9M304.0 363.0V382.6M305.0 364.6V371.1M306.0 367.3V374.0M307.0 362.3V373.6M308.0 362.1V367.6M309.0 364.0V375.2M310.0 368.2V374.7M311.0 365.2V370.1M312.0 364.0V374.1M313.0 364.3V377.4M314.0 368.7V370.6M315.0 367.7V374.0M316.0 360.9V375.0M317.0 362.4V367.8M318.0 355.4V367.6M319.0 346.5V360.1M320.0 348.5V352.5M321.0 340.4V350.7M322.0 332.8V346.8M323.0 331.7V336.8M324.0 326.3V336.2M325.0 318.1V332.4M326.0 309.6V323.5M327.0 302.0V313.2M328.0 303.3V307.1M329.0 295.5V308.5M330.0 271.8V300.5M331.0 292.8V299.4M332.0 291.0V295.6M333.0 285.9V292.4M334.0 283.3V293.2M335.0 281.8V288.8M336.0 274.0V285.0M337.0 278.3V289.3M338.0 268.3V295.4M339.0 250.4V270.4M340.0 251.7V265.1M341.0 252.0V258.2M342.0 248.5V258.6M343.0 249.7V262.5M344.0 245.2V253.4M345.0 240.4V247.4M346.0 238.2V249.1M347.0 233.2V244.0M348.0 225.7V236.9M349.0 218.3V229.3M350.0 212.8V231.2M351.0 219.0V233.2M352.0 226.2V236.4M353.0 233.2V239.7M354.0 229.4V236.0M355.0 225.3V232.9M356.0 211.7V243.1M357.0 224.3V230.0M358.0 224.8V226.8M359.0 222.8V248.0M360.0 225.1V229.5M361.0 227.8V234.4M362.0 231.9V238.3M363.0 233.6V241.6M364.0 237.2V249.0M365.0 245.5V253.4M366.0 251.6V260.7M367.0 254.8V258.8M368.0 245.2V260.1M369.0 235.0V247.9M370.0 223.8V242.6M371.0 222.7V234.8M372.0 219.9V224.7M373.0 219.0V224.8M374.0 203.7V220.5M375.0 202.7V216.3M376.0 196.7V206.4M377.0 194.9V209.6M378.0 188.9V199.9M379.0 189.4V199.0M380.0 186.0V198.9M381.0 184.6V191.4M382.0 182.2V190.8M383.0 173.5V185.4M384.0 160.0V180.2M385.0 167.3V173.5M386.0 153.2V171.0M387.0 162.9V167.2M388.0 160.9V175.5M389.0 158.5V167.6M390.0 161.0V173.9M391.0 155.1V175.2M392.0 153.8V165.5M393.0 152.9V160.9M394.0 145.3V156.9M395.0 147.8V160.0M396.0 150.6V157.7M397.0 155.2V163.0M398.0 161.4V164.3M399.0 134.5V168.6M400.0 149.4V161.2M401.0 138.8V157.9M402.0 144.2V161.8M403.0 153.8V166.2M404.0 159.3V165.5M405.0 156.4V174.3M406.0 162.1V169.8M407.0 160.8V173.8M408.0 170.8V180.3M409.0 176.6V187.7M410.0 181.4V222.0M411.0 178.9V194.8M412.0 190.0V193.4M413.0 181.9V194.8M414.0 180.9V188.5M415.0 181.5V189.3M416.0 185.2V189.5M417.0 183.7V207.7M418.0 168.8V189.6M419.0 169.6V179.7M420.0 172.2V186.3M421.0 167.9V179.4M422.0 169.5V175.9M423.0 166.0V176.5M424.0 163.9V173.0M425.0 149.7V168.4M426.0 146.5V158.0M427.0 141.0V157.0M428.0 144.3V156.8M429.0 136.3V151.6M430.0 130.3V143.4M431.0 123.2V142.5M432.0 115.5V129.5M433.0 80.0V123.3M434.0 109.5V116.6M435.0 106.8V112.3M436.0 96.5V115.2M437.0 98.5V103.2M438.0 96.9V101.6M439.0 83.4V105.6M440.0 96.3V110.8M441.0 83.2V106.4M442.0 95.0V103.0M443.0 72.0V101.7M444.0 97.1V124.3M445.0 86.7V105.0M446.0 87.4V97.2M447.0 92.1V100.7M448.0 86.2V98.2M449.0 77.5V97.1M450.0 73.8V92.6M451.0 71.3V83.6M452.0 65.3V81.6M453.0 63.9V72.2M454.0 58.6V73.3M455.0 58.0V70.9M456.0 49.0V63.0M457.0 43.1V57.7M458.0 28.8V46.8M459.0 24.2V38.6M460.0 23.7V37.9M461.0 30.6V46.1M462.0 13.5V48.5M463.0 32.2V75.6M464.0 37.0V55.2M465.0 41.0V79.4M466.0 48.0V74.6M467.0 55.9V60.7M468.0 57.1V63.4M469.0 57.0V74.7M470.0 57.6V74.3M471.0 67.3V87.3M472.0 78.5V86.1M473.0 78.2V101.7M474.0 94.9V113.4M475.0 107.9V119.9M476.0 109.3V151.0M477.0 124.9V131.2M478.0 121.5V134.2M479.0 130.1V136.9M480.0 130.1V136.6M481.0 130.9V141.3M482.0 137.4V142.5M483.0 129.7V141.1M484.0 124.5V147.4M485.0 132.1V156.8M486.0 150.2V162.1M487.0 155.2V167.1M488.0 152.6V189.8M489.0 155.2V164.7M490.0 157.5V162.5M491.0 160.4V175.5M492.0 159.9V173.2M493.0 155.7V169.8M494.0 157.2V165.4M495.0 156.1V165.7M496.0 155.4V165.9M497.0 146.0V171.7M498.0 168.5V179.5M499.0 175.6V219.3M500.0 178.1V190.5M501.0 180.5V190.7M502.0 182.7V193.3M503.0 187.6V198.6M504.0 194.5V199.8M505.0 193.0V209.0M506.0 187.1V197.2M507.0 185.5V198.9M508.0 193.7V227.7M509.0 197.1V206.6M510.0 200.5V211.7M511.0 203.3V211.0M512.0 203.3V217.5M513.0 213.0V227.4M514.0 212.6V225.3M515.0 218.7V225.4M516.0 219.0V250.5M517.0 221.1V237.5M518.0 234.2V237.9M519.0 228.6V241.0M520.0 231.1V242.8M521.0 231.5V239.2M522.0 225.9V239.0M523.0 222.9V232.1M524.0 217.9V227.4M525.0 216.9V230.1M526.0 217.4V223.5M527.0 218.1V223.2M528.0 211.5V223.9M529.0 205.7V221.5M530.0 208.6V213.6M531.0 203.4V213.6M532.0 197.4V211.1M533.0 201.7V214.3M534.0 187.8V207.4M535.0 190.6V201.5M536.0 190.3V194.8M537.0 190.4V203.8M538.0 186.9V199.6M539.0 179.0V189.0M540.0 174.9V184.6M541.0 175.1V188.1M542.0 173.2V182.2M543.0 167.5V186.9M544.0 162.3V181.1M545.0 162.6V167.6M546.0 155.9V163.9M547.0 160.8V170.5M548.0 149.8V174.7M549.0 171.0V178.1M550.0 172.3V187.3M551.0 178.2V184.4M552.0 180.2V196.6M553.0 188.3V202.3M554.0 199.2V212.3M555.0 198.2V203.9M556.0 185.9V206.4M557.0 195.6V205.6M558.0 196.7V203.2M559.0 190.3V227.7M560.0 194.4V197.1M561.0 189.3V201.9M562.0 194.2V205.5M563.0 196.6V204.5M564.0 189.6V208.5M565.0 192.0V196.5M566.0 184.8V199.0M567.0 179.2V192.6M568.0 188.0V201.0M569.0 190.9V201.8M570.0 185.9V194.6M571.0 186.1V196.4M572.0 192.0V203.4M573.0 193.4V199.2M574.0 188.2V197.1M575.0 187.4V192.8M576.0 187.6V195.1M577.0 170.7V194.3M578.0 186.2V193.0M579.0 181.4V188.9M580.0 177.3V185.3M581.0 173.3V192.2M582.0 184.4V191.1M583.0 151.0V192.7M584.0 171.7V195.4M585.0 175.2V178.7M586.0 175.7V177.2M587.0 165.8V186.3M588.0 157.1V169.0M589.0 159.5V175.9M590.0 155.5V163.6M591.0 145.4V159.0M592.0 137.9V150.6M593.0 139.0V152.1M594.0 142.4V153.4M595.0 137.4V148.5M596.0 131.9V152.5M597.0 126.4V138.5M598.0 113.5V137.1M599.0 115.2V126.0M600.0 119.5V122.6M601.0 117.6V123.9M602.0 121.3V128.2M603.0 122.4V129.5M604.0 127.6V138.2M605.0 121.4V139.4M606.0 130.5V142.7M607.0 133.4V147.2M608.0 140.1V145.2M609.0 134.5V143.7M610.0 127.3V139.1M611.0 122.0V136.3M612.0 111.7V125.4M613.0 105.3V115.2M614.0 110.0V115.1M615.0 101.8V125.3M616.0 102.0V116.2M617.0 97.4V109.4M618.0 91.7V101.5M619.0 59.2V103.2M620.0 80.6V94.3M621.0 87.3V95.5M622.0 79.4V95.9M623.0 94.3V100.3M624.0 92.9V103.1M625.0 90.9V109.8M626.0 105.0V119.6M627.0 113.8V127.1M628.0 125.0V135.3M629.0 130.2V135.7M630.0 126.4V155.7M631.0 128.9V133.0M632.0 121.8V134.5M633.0 120.1V128.7M634.0 114.2V133.6M635.0 107.8V123.8M636.0 106.8V118.2M637.0 112.4V117.7M638.0 114.5V147.3M639.0 119.3V125.9M640.0 117.3V127.8M641.0 114.0V123.2M642.0 91.0V121.3M643.0 89.7V108.2M644.0 99.2V108.5M645.0 82.8V103.7M646.0 89.4V96.5M647.0 85.7V91.5M648.0 81.5V92.2M649.0 87.2V94.8M650.0 81.1V92.5M651.0 85.0V87.1M652.0 65.8V88.8M653.0 72.5V77.7M654.0 71.1V84.1M655.0 70.7V79.6M656.0 71.4V91.7M657.0 67.1V84.1M658.0 72.0V86.2M659.0 58.6V77.2M660.0 63.6V88.3M661.0 59.4V86.1M662.0 56.2V71.7M663.0 55.3V70.3M664.0 57.8V69.9M665.0 56.1V65.2M666.0 56.7V59.8M667.0 46.3V68.1M668.0 51.9V72.5M669.0 52.7V60.4M670.0 49.1V58.9M671.0 37.8V55.5M672.0 37.1V44.7M673.0 38.5V49.6M674.0 42.1V49.0M675.0 41.4V50.8M676.0 40.6V49.0M677.0 42.3V46.9M678.0 42.3V45.9M679.0 36.5V52.1M680.0 31.0V55.0M681.0 30.4V58.6M682.0 44.4V56.1M683.0 46.7V56.4M684.0 45.8V52.8M685.0 34.0V41.0M686.0 34.0V39.5M687.0 35.0V39.0M688.0 34.5V38.0M689.0 33.5V37.5M690.0 33.2V36.6M691.0 32.5V35.5M692.0 31.8V34.5M693.0 30.0V37.0M694.0 28.0V36.0M695.0 25.0V32.0M696.0 27.0V39.0M697.0 29.0V44.3M698.0 21.0V44.3M699.0 18.8V29.0M700.0 26.0V41.0M701.0 28.0V42.0M702.0 26.0V31.0M703.0 23.0V28.0M704.0 20.0V25.0M705.0 17.5V22.5M706.0 15.0V20.0M707.0 15.0V17.5" stroke="#00ff00" stroke-width="1.3" fill="none"/>
<path d="M4.0 463.5C5.2 464.6 9.4 469.5 11.7 470.3C14.0 471.1 16.2 468.0 18.5 468.3C20.8 468.6 24.0 471.3 26.3 472.0C28.6 472.7 30.8 471.9 33.1 472.9C35.4 473.9 38.5 476.8 40.8 478.0C43.1 479.2 45.2 480.4 47.7 480.1C50.2 479.8 53.9 477.0 56.2 476.3C58.5 475.6 60.2 477.1 62.2 475.5C64.2 473.9 66.7 468.2 69.0 466.0C71.3 463.8 74.5 463.8 76.8 461.8C79.1 459.8 81.8 456.5 83.6 453.2C85.4 449.9 86.5 445.0 87.9 441.2C89.3 437.4 90.4 431.7 92.2 429.2C94.0 426.7 96.7 427.8 99.0 425.8C101.3 423.8 104.6 416.7 106.7 416.4C108.8 416.1 110.1 421.5 111.9 424.1C113.7 426.7 115.9 432.2 117.9 432.7C119.9 433.2 122.8 428.7 124.7 427.5C126.6 426.3 127.9 425.3 129.8 425.0C131.7 424.7 134.5 426.2 136.7 425.8C138.9 425.4 141.3 423.6 143.5 422.4C145.7 421.2 148.2 419.9 150.4 418.1C152.6 416.3 155.3 412.9 157.2 411.3C159.1 409.7 160.5 407.3 162.4 407.8C164.3 408.3 167.0 413.3 169.2 414.7C171.4 416.1 174.0 415.7 176.1 416.4C178.2 417.1 179.9 418.9 182.1 419.0C184.3 419.1 187.8 417.3 189.8 417.3C191.8 417.3 192.8 419.3 194.8 419.2C196.8 419.1 200.4 416.9 202.6 416.6C204.8 416.3 206.7 417.1 208.5 417.5C210.3 417.9 212.1 420.2 213.7 418.8C215.3 417.4 217.0 412.4 218.8 408.9C220.6 405.4 223.2 400.9 224.8 396.9C226.4 392.9 227.9 387.0 229.1 384.1C230.3 381.2 231.1 379.7 232.5 378.9C233.9 378.1 236.1 378.6 237.7 378.9C239.3 379.2 241.2 380.7 242.8 380.7C244.4 380.7 246.3 380.1 247.9 378.9C249.5 377.7 251.2 372.9 252.7 372.9C254.2 372.9 255.9 377.0 257.3 378.9C258.7 380.8 260.1 384.2 261.6 384.9C263.1 385.6 264.9 384.7 266.8 383.2C268.7 381.7 271.7 378.1 273.6 375.5C275.5 372.9 277.5 368.7 278.8 367.0C280.1 365.3 280.6 364.3 281.8 364.7C283.0 365.1 285.1 367.4 286.5 369.2C287.9 371.0 289.1 375.4 290.7 376.0C292.3 376.6 295.2 374.3 296.7 373.0C298.2 371.7 298.8 369.0 300.2 367.8C301.6 366.6 303.5 365.5 305.3 365.2C307.1 364.9 309.4 366.0 311.3 366.1C313.2 366.2 315.8 366.8 317.3 366.1C318.8 365.4 319.7 364.0 320.7 361.8C321.7 359.6 322.5 356.1 323.3 352.4C324.1 348.7 325.0 342.8 325.8 338.7C326.6 334.6 327.7 331.0 328.4 326.7C329.1 322.4 329.1 317.1 330.3 311.9C331.5 306.7 334.2 298.7 335.8 294.1C337.4 289.5 339.1 287.6 340.3 283.0C341.5 278.4 342.4 270.8 343.6 265.1C344.8 259.4 346.5 252.6 348.1 247.3C349.7 242.0 352.2 235.4 353.7 231.7C355.2 228.0 356.0 224.1 357.4 223.9C358.8 223.7 361.2 227.8 362.6 230.6C364.0 233.4 365.2 239.0 366.4 241.7C367.6 244.4 369.2 248.2 370.4 247.3C371.6 246.4 372.8 241.4 373.7 236.2C374.6 231.0 375.0 222.0 376.0 215.0C377.0 208.0 378.4 198.0 379.8 192.3C381.2 186.6 383.4 183.0 385.0 179.5C386.6 176.0 388.3 172.8 390.1 170.5C391.9 168.2 394.6 168.1 396.5 165.4C398.4 162.7 400.3 156.2 401.7 153.8C403.1 151.4 404.0 149.9 405.0 150.7C406.0 151.5 407.0 154.7 408.1 158.9C409.2 163.1 410.7 172.4 411.9 176.9C413.1 181.4 414.6 185.6 415.8 187.2C417.0 188.8 418.2 189.1 419.6 187.2C421.0 185.3 422.9 180.5 424.3 175.6C425.7 170.7 427.3 162.4 428.6 156.4C429.9 150.4 431.5 144.2 432.5 138.4C433.5 132.6 434.3 126.1 435.1 120.4C435.9 114.7 436.9 106.7 437.8 102.9C438.7 99.1 439.2 97.9 440.6 96.4C442.0 94.9 444.6 94.9 446.3 93.5C448.0 92.1 449.5 90.3 451.0 87.9C452.5 85.5 454.5 82.1 455.7 78.5C456.9 74.9 457.7 69.5 458.5 65.3C459.3 61.1 460.1 55.2 460.9 52.1C461.7 49.0 462.5 46.3 463.6 46.1C464.7 45.9 466.6 49.4 467.9 51.1C469.2 52.8 470.7 53.9 471.7 56.8C472.7 59.7 473.3 64.3 474.1 69.0C474.9 73.7 475.7 80.6 476.4 86.0C477.1 91.4 477.6 97.9 478.3 102.9C479.0 107.9 479.8 113.0 480.5 117.0C481.2 121.0 481.3 125.3 482.4 128.2C483.5 131.1 485.9 131.8 487.2 135.4C488.5 139.0 489.3 146.6 490.8 151.0C492.3 155.4 495.1 158.4 496.8 163.0C498.5 167.6 500.1 174.5 501.6 179.7C503.1 184.9 504.4 191.8 505.9 195.3C507.4 198.8 509.3 198.4 510.7 201.3C512.1 204.2 513.5 209.5 514.8 213.3C516.1 217.1 517.5 222.2 518.8 225.3C520.1 228.4 521.4 232.3 522.7 232.5C524.0 232.7 525.3 228.8 526.7 226.5C528.1 224.2 530.0 221.9 531.5 218.1C533.0 214.3 534.8 207.7 536.3 202.5C537.8 197.3 539.6 190.9 541.1 185.7C542.6 180.5 544.5 173.6 545.9 170.1C547.3 166.6 548.8 163.3 550.0 164.1C551.2 164.9 552.0 170.5 553.1 174.9C554.2 179.3 555.5 186.9 556.7 191.7C557.9 196.5 559.0 202.4 560.3 204.9C561.6 207.4 563.6 207.9 565.1 207.3C566.6 206.7 568.4 204.0 569.9 201.3C571.4 198.6 573.0 193.4 574.7 190.5C576.4 187.6 579.0 185.4 580.7 183.3C582.4 181.2 583.8 178.8 585.5 177.3C587.2 175.8 590.0 176.4 591.5 173.7C593.0 171.0 594.1 164.8 595.1 160.6C596.1 156.4 596.6 151.5 597.6 147.3C598.6 143.1 600.0 136.8 601.2 134.1C602.4 131.4 604.0 130.9 605.3 130.5C606.6 130.1 608.1 132.9 609.6 131.7C611.1 130.5 613.1 126.9 614.4 123.3C615.7 119.7 616.8 113.5 618.0 108.9C619.2 104.3 620.6 97.9 621.6 94.5C622.6 91.1 623.4 87.0 624.4 87.8C625.4 88.6 626.6 94.4 627.6 99.3C628.6 104.2 629.7 113.5 630.7 118.5C631.7 123.5 632.6 128.6 633.6 130.5C634.6 132.4 635.8 132.6 636.7 130.5C637.6 128.4 638.3 120.6 639.5 117.3C640.7 114.0 643.0 113.7 644.3 110.1C645.6 106.5 646.7 98.9 647.9 94.5C649.1 90.1 650.3 85.8 651.5 82.5C652.7 79.2 653.6 75.8 655.1 74.1C656.6 72.4 659.4 73.3 661.1 71.8C662.8 70.3 664.4 66.9 665.9 64.6C667.4 62.3 669.2 59.7 670.7 57.4C672.2 55.1 674.3 52.1 675.5 50.2C676.7 48.3 677.4 46.8 678.5 45.3C679.6 43.8 680.6 41.4 682.1 40.7C683.6 40.0 686.1 41.4 687.8 40.7C689.5 40.0 691.1 37.5 692.9 36.1C694.7 34.7 697.2 33.3 699.0 32.0C700.8 30.7 702.8 29.1 704.2 27.9C705.6 26.7 707.2 25.3 707.8 24.8" stroke="#ff0000" stroke-width="3.7" fill="none" stroke-linejoin="round" stroke-linecap="round"/>
<line x1="768" y1="493" x2="883" y2="481.29999999999995" stroke="#d00000" stroke-width="1.2"/>
<path d="M2.8000000000000114 3.5H883.5V493.5H2.8000000000000114Z" stroke="#fff" stroke-width="1" fill="none"/>
<path d="M3.0 9.5V493.5" stroke="#c8c8c8" stroke-width="1.5" fill="none"/>
<path d="M702 4H711L706.5 8.5Z" fill="#8496ac"/>
<line x1="698.5" x2="698.5" y1="18" y2="30" stroke="#c86432" stroke-width="1" stroke-dasharray="2 1"/>
<circle cx="698" cy="14.5" r="3.6" fill="#f6dcd4"/><path d="M698 11.5l2.6 3l-2.6 3l-2.6 -3z" fill="#e8402c"/>
<path d="M700 29.5l4 4h-2.2v3h-3.6v-3h-2.2z" fill="#fff"/><path d="M700 30.799999999999997l2.6 2.8h-1.4v2.2h-2.4v-2.2h-1.4z" fill="#1e64c8"/>
<line x1="883.5" x2="887" y1="11.3" y2="11.3" stroke="#fff" stroke-width="1"/>
<text transform="translate(888.6,14.5) scale(0.885,1)" class="pl" >152.265</text>
<line x1="883.5" x2="887" y1="39.7" y2="39.7" stroke="#fff" stroke-width="1"/>
<text transform="translate(888.6,42.9) scale(0.885,1)" class="pl" >149.310</text>
<line x1="883.5" x2="887" y1="68.0" y2="68.0" stroke="#fff" stroke-width="1"/>
<text transform="translate(888.6,71.2) scale(0.885,1)" class="pl" >146.355</text>
<line x1="883.5" x2="887" y1="96.4" y2="96.4" stroke="#fff" stroke-width="1"/>
<text transform="translate(888.6,99.6) scale(0.885,1)" class="pl" >143.400</text>
<line x1="883.5" x2="887" y1="124.7" y2="124.7" stroke="#fff" stroke-width="1"/>
<text transform="translate(888.6,127.9) scale(0.885,1)" class="pl" >140.445</text>
<line x1="883.5" x2="887" y1="153.1" y2="153.1" stroke="#fff" stroke-width="1"/>
<text transform="translate(888.6,156.3) scale(0.885,1)" class="pl" >137.490</text>
<line x1="883.5" x2="887" y1="181.5" y2="181.5" stroke="#fff" stroke-width="1"/>
<text transform="translate(888.6,184.7) scale(0.885,1)" class="pl" >134.535</text>
<line x1="883.5" x2="887" y1="209.8" y2="209.8" stroke="#fff" stroke-width="1"/>
<text transform="translate(888.6,213.0) scale(0.885,1)" class="pl" >131.580</text>
<line x1="883.5" x2="887" y1="238.2" y2="238.2" stroke="#fff" stroke-width="1"/>
<text transform="translate(888.6,241.4) scale(0.885,1)" class="pl" >128.625</text>
<line x1="883.5" x2="887" y1="266.5" y2="266.5" stroke="#fff" stroke-width="1"/>
<text transform="translate(888.6,269.7) scale(0.885,1)" class="pl" >125.670</text>
<line x1="883.5" x2="887" y1="294.9" y2="294.9" stroke="#fff" stroke-width="1"/>
<text transform="translate(888.6,298.1) scale(0.885,1)" class="pl" >122.715</text>
<line x1="883.5" x2="887" y1="323.3" y2="323.3" stroke="#fff" stroke-width="1"/>
<text transform="translate(888.6,326.5) scale(0.885,1)" class="pl" >119.760</text>
<line x1="883.5" x2="887" y1="351.6" y2="351.6" stroke="#fff" stroke-width="1"/>
<text transform="translate(888.6,354.8) scale(0.885,1)" class="pl" >116.805</text>
<line x1="883.5" x2="887" y1="380.0" y2="380.0" stroke="#fff" stroke-width="1"/>
<text transform="translate(888.6,383.2) scale(0.885,1)" class="pl" >113.850</text>
<line x1="883.5" x2="887" y1="408.3" y2="408.3" stroke="#fff" stroke-width="1"/>
<text transform="translate(888.6,411.5) scale(0.885,1)" class="pl" >110.895</text>
<line x1="883.5" x2="887" y1="436.7" y2="436.7" stroke="#fff" stroke-width="1"/>
<text transform="translate(888.6,439.9) scale(0.885,1)" class="pl" >107.940</text>
<line x1="883.5" x2="887" y1="465.1" y2="465.1" stroke="#fff" stroke-width="1"/>
<text transform="translate(888.6,468.3) scale(0.885,1)" class="pl" >104.985</text>
<rect x="885.2" y="11.9" width="34.8" height="9.7" fill="#0000e0"/>
<text transform="translate(888.6,19.9) scale(0.885,1)" class="pl" style="fill:#000">151.712</text>
<rect x="885.2" y="52.7" width="34.8" height="9.7" fill="#0000e0"/>
<text transform="translate(888.6,60.7) scale(0.885,1)" class="pl" style="fill:#000">147.468</text>
<rect x="885.2" y="256.4" width="34.8" height="9.7" fill="#0000e0"/>
<text transform="translate(888.6,264.4) scale(0.885,1)" class="pl" style="fill:#000">126.252</text>
<rect x="885.2" y="363.4" width="34.8" height="9.7" fill="#0000e0"/>
<text transform="translate(888.6,371.4) scale(0.885,1)" class="pl" style="fill:#000">115.084</text>
<line x1="3.0" x2="3.0" y1="493.5" y2="497" stroke="#fff" stroke-width="1"/>
<text transform="translate(2.2,504.8) scale(0.935,1)" class="pl" >23 Oct 2020</text>
<line x1="59.7" x2="59.7" y1="493.5" y2="497" stroke="#fff" stroke-width="1"/>
<text transform="translate(58.9,504.8) scale(0.935,1)" class="pl" >25 Jan 2021</text>
<line x1="116.4" x2="116.4" y1="493.5" y2="497" stroke="#fff" stroke-width="1"/>
<text transform="translate(115.6,504.8) scale(0.935,1)" class="pl" >23 Apr 2021</text>
<line x1="173.0" x2="173.0" y1="493.5" y2="497" stroke="#fff" stroke-width="1"/>
<text transform="translate(172.2,504.8) scale(0.935,1)" class="pl" >22 Jul 2021</text>
<line x1="229.7" x2="229.7" y1="493.5" y2="497" stroke="#fff" stroke-width="1"/>
<text transform="translate(228.9,504.8) scale(0.935,1)" class="pl" >20 Oct 2021</text>
<line x1="286.4" x2="286.4" y1="493.5" y2="497" stroke="#fff" stroke-width="1"/>
<text transform="translate(285.6,504.8) scale(0.935,1)" class="pl" >18 Jan 2022</text>
<line x1="343.1" x2="343.1" y1="493.5" y2="497" stroke="#fff" stroke-width="1"/>
<text transform="translate(342.3,504.8) scale(0.935,1)" class="pl" >18 Apr 2022</text>
<line x1="399.8" x2="399.8" y1="493.5" y2="497" stroke="#fff" stroke-width="1"/>
<text transform="translate(399.0,504.8) scale(0.935,1)" class="pl" >15 Jul 2022</text>
<line x1="456.4" x2="456.4" y1="493.5" y2="497" stroke="#fff" stroke-width="1"/>
<text transform="translate(455.6,504.8) scale(0.935,1)" class="pl" >13 Oct 2022</text>
<line x1="513.1" x2="513.1" y1="493.5" y2="497" stroke="#fff" stroke-width="1"/>
<text transform="translate(512.3,504.8) scale(0.935,1)" class="pl" >11 Jan 2023</text>
<line x1="569.8" x2="569.8" y1="493.5" y2="497" stroke="#fff" stroke-width="1"/>
<text transform="translate(569.0,504.8) scale(0.935,1)" class="pl" >11 Apr 2023</text>
<line x1="626.5" x2="626.5" y1="493.5" y2="497" stroke="#fff" stroke-width="1"/>
<text transform="translate(625.7,504.8) scale(0.935,1)" class="pl" >10 Jul 2023</text>
<line x1="683.2" x2="683.2" y1="493.5" y2="497" stroke="#fff" stroke-width="1"/>
<text transform="translate(682.4,504.8) scale(0.935,1)" class="pl" >6 Oct 2023</text>
<text x="43.60000000000002" y="15.900000000000006" class="ttl" textLength="128.6" lengthAdjust="spacingAndGlyphs" xml:space="preserve">USDJPY, Daily:  US Dollar vs Yen</text>
<g transform="translate(-272,-75)"><rect x="279" y="83" width="6.6" height="9.8" fill="#e23a28"/><rect x="285.6" y="83" width="6.5" height="9.8" fill="#2878c8"/><rect x="280" y="84.3" width="11.1" height="7.6" fill="#fff"/><path d="M280.9 85.6H285M280.9 88.1H285M280.9 90.6H285" stroke="#e04432" stroke-width="1"/><path d="M286.2 85.6H290.2M286.2 88.1H290.2M286.2 90.6H290.2" stroke="#2878c8" stroke-width="1"/><path d="M298.2 83.7H300.3V87.4H303.3V92.3H298.2Z" fill="#fcd6cc" stroke="#e03a26" stroke-width="1"/><path d="M308.4 83.7H310.4V92.3H305.5V87.4H308.4Z" fill="#b4daf8" stroke="#2474c4" stroke-width="1"/><rect x="302.3" y="83.8" width="3.8" height="1.5" fill="#dcdcdc"/></g>
</svg>
</div>
</body></html>
